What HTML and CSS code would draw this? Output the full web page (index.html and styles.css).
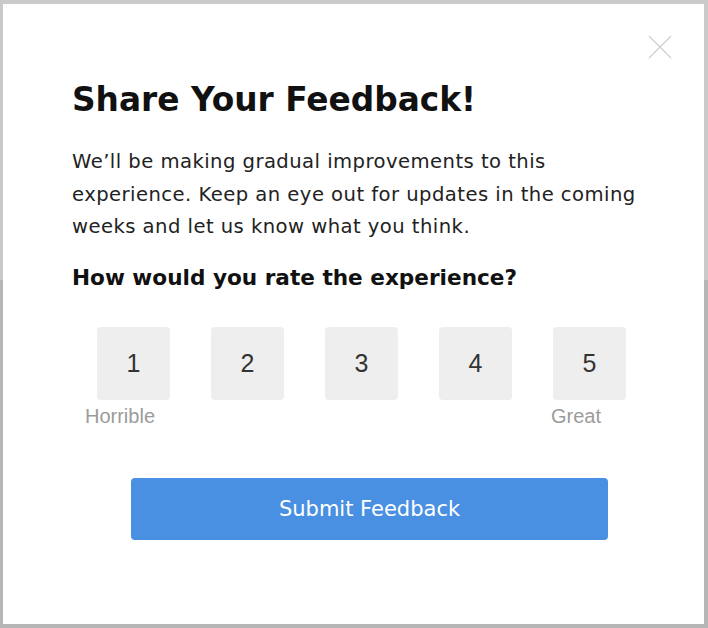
FILE: index.html
```html
<!DOCTYPE html>
<html lang="en">
<head>
<meta charset="utf-8">
<title>Share Your Feedback</title>
<link rel="stylesheet" href="styles.css">
</head>
<body>
<div class="modal">
  <button class="close" aria-label="Close">
    <svg width="24" height="24" viewBox="0 0 24 24"><path d="M1 1 L23 23 M23 1 L1 23" stroke="#cfcfcf" stroke-width="1.3" fill="none"/></svg>
  </button>
  <h1 class="title">Share Your Feedback!</h1>
  <p class="intro">We’ll be making gradual improvements to this experience. Keep an eye out for updates in the coming weeks and let us know what you think.</p>
  <h2 class="question">How would you rate the experience?</h2>
  <div class="ratings">
    <div class="rating"><div class="box">1</div><span class="label">Horrible</span></div>
    <div class="rating"><div class="box">2</div></div>
    <div class="rating"><div class="box">3</div></div>
    <div class="rating"><div class="box">4</div></div>
    <div class="rating"><div class="box">5</div><span class="label">Great</span></div>
  </div>
  <button class="submit">Submit Feedback</button>
</div>
</body>
</html>
```
FILE: styles.css
```css
html, body { margin: 0; padding: 0; }
body {
  width: 708px;
  height: 628px;
  background: linear-gradient(#cacaca 0, #cacaca 280px, #b6b6b6 280px);
  font-family: "DejaVu Sans", "Open Sans", sans-serif;
  padding: 4px 4px 4px 3px;
  box-sizing: border-box;
  overflow: hidden;
}
.modal {
  position: relative;
  background: #fff;
  width: 701px;
  height: 620px;
  box-sizing: border-box;
  padding: 71px 61px 0 69px;
}
.close {
  position: absolute;
  top: 31px;
  left: 645px;
  width: 24px;
  height: 24px;
  padding: 0;
  border: 0;
  background: none;
}
.close svg { display: block; }
.title {
  margin: 0;
  font-size: 32.8px;
  line-height: 50px;
  font-weight: 700;
  color: #111;
  white-space: nowrap;
}
.intro {
  margin: 21px 0 0;
  font-size: 19.6px;
  line-height: 32.5px;
  letter-spacing: 0.45px;
  color: #222;
}
.question {
  margin: 17px 0 0;
  font-size: 21.6px;
  line-height: 34px;
  font-weight: 700;
  color: #111;
  white-space: nowrap;
}
.ratings {
  display: flex;
  gap: 41px;
  margin: 32px 0 0 25px;
}
.rating {
  position: relative;
  width: 73px;
}
.box {
  width: 73px;
  height: 73px;
  border-radius: 4px;
  background: #eeeeee;
  display: flex;
  align-items: center;
  justify-content: center;
  font-family: "Liberation Sans", Arial, sans-serif;
  font-size: 25px;
  color: #333;
}
.label {
  display: block;
  width: 100px;
  margin-left: -27px;
  text-align: center;
  font-family: "Liberation Sans", Arial, sans-serif;
  font-size: 20px;
  line-height: 32px;
  color: #9b9b9b;
}
.submit {
  display: block;
  margin: 46px 0 0 59px;
  width: 477px;
  height: 62px;
  border: 0;
  border-radius: 4px;
  background: #4a90e2;
  color: #fff;
  font-family: inherit;
  font-size: 21px;
}
```
